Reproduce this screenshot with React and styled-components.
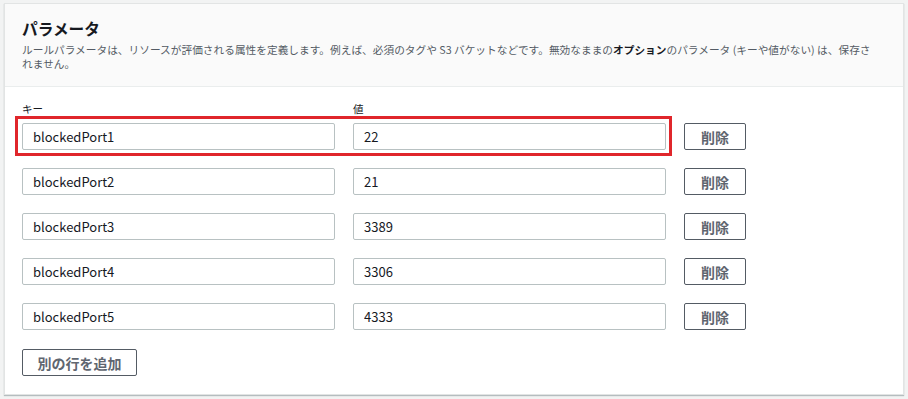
import React from 'react';
import styled, { createGlobalStyle } from 'styled-components';

const GlobalStyle = createGlobalStyle`
  html, body {
    margin: 0;
    padding: 0;
    background: #f2f3f3;
  }
  body {
    font-family: "Noto Sans CJK JP", "Noto Sans", sans-serif;
    color: #16191f;
  }
`;

const Page = styled.div`
  padding: 3px 4px 4px 4px;
`;

const Panel = styled.section`
  width: 900px;
  height: 392px;
  box-sizing: border-box;
  background: #fff;
  border: 1px solid #e2e4e4;
  box-shadow: 0 1px 1px rgba(0, 28, 36, 0.25);
  display: flex;
  flex-direction: column;
`;

const Header = styled.header`
  background: #fafafa;
  border-bottom: 1px solid #eaeded;
  padding: 14px 17px 15px 17px;
`;

const Title = styled.h2`
  margin: 0;
  font-size: 15.7px;
  line-height: 22px;
  font-weight: 700;
  color: #16191f;
`;

const Description = styled.p`
  margin: 3px 0 0 0;
  max-width: 858px;
  font-size: 10.7px;
  line-height: 14px;
  color: #545b64;

  strong {
    font-weight: 700;
    color: #16191f;
  }
`;

const Body = styled.div`
  padding: 15px 17px 0 17px;
  display: flex;
  flex-direction: column;
`;

const Grid = styled.div`
  display: grid;
  grid-template-columns: 313px 313px 62px;
  column-gap: 18px;
`;

const Labels = styled(Grid)`
  margin-bottom: 7px;
`;

const Label = styled.label`
  font-size: 10.5px;
  line-height: 14px;
  color: #16191f;
`;

const Rows = styled.div`
  display: flex;
  flex-direction: column;
  gap: 18px;
`;

const Row = styled(Grid)`
  position: relative;
  height: 27px;
`;

const Highlight = styled.div`
  position: absolute;
  left: -7px;
  top: -7px;
  width: 657px;
  height: 40px;
  box-sizing: border-box;
  border: 3px solid #e0262b;
  pointer-events: none;
`;

const Field = styled.input`
  box-sizing: border-box;
  width: 100%;
  height: 27px;
  margin: 0;
  padding: 0 10px;
  border: 1px solid #b8c1c2;
  border-radius: 2px;
  background: #fff;
  font-family: inherit;
  font-size: 13px;
  color: #16191f;
  outline: none;
`;

const Button = styled.button`
  box-sizing: border-box;
  height: 27px;
  width: ${p => p.width || 'auto'};
  margin: 0;
  padding: 0;
  border: 1px solid #545b64;
  border-radius: 2px;
  background: #fff;
  font-family: inherit;
  font-size: ${p => p.size || '14px'};
  font-weight: 700;
  color: #5f6670;
  cursor: pointer;
`;

const Footer = styled.div`
  margin-top: 19px;
`;

const params = [
  { key: 'blockedPort1', value: '22' },
  { key: 'blockedPort2', value: '21' },
  { key: 'blockedPort3', value: '3389' },
  { key: 'blockedPort4', value: '3306' },
  { key: 'blockedPort5', value: '4333' },
];

const App = () => {
  return (
    <Page>
      <GlobalStyle />
      <Panel>
        <Header>
          <Title>パラメータ</Title>
          <Description>
            ルールパラメータは、リソースが評価される属性を定義します。例えば、必須のタグや S3 バケットなどです。無効なままの<strong>オプション</strong>のパラメータ (キーや値がない) は、保存されません。
          </Description>
        </Header>
        <Body>
          <Labels>
            <Label>キー</Label>
            <Label>値</Label>
          </Labels>
          <Rows>
            {params.map((p, i) => (
              <Row key={p.key}>
                {i === 0 && <Highlight />}
                <Field defaultValue={p.key} readOnly />
                <Field defaultValue={p.value} readOnly />
                <Button width="62px">削除</Button>
              </Row>
            ))}
          </Rows>
          <Footer>
            <Button width="115px">別の行を追加</Button>
          </Footer>
        </Body>
      </Panel>
    </Page>
  );
};

export default App;
